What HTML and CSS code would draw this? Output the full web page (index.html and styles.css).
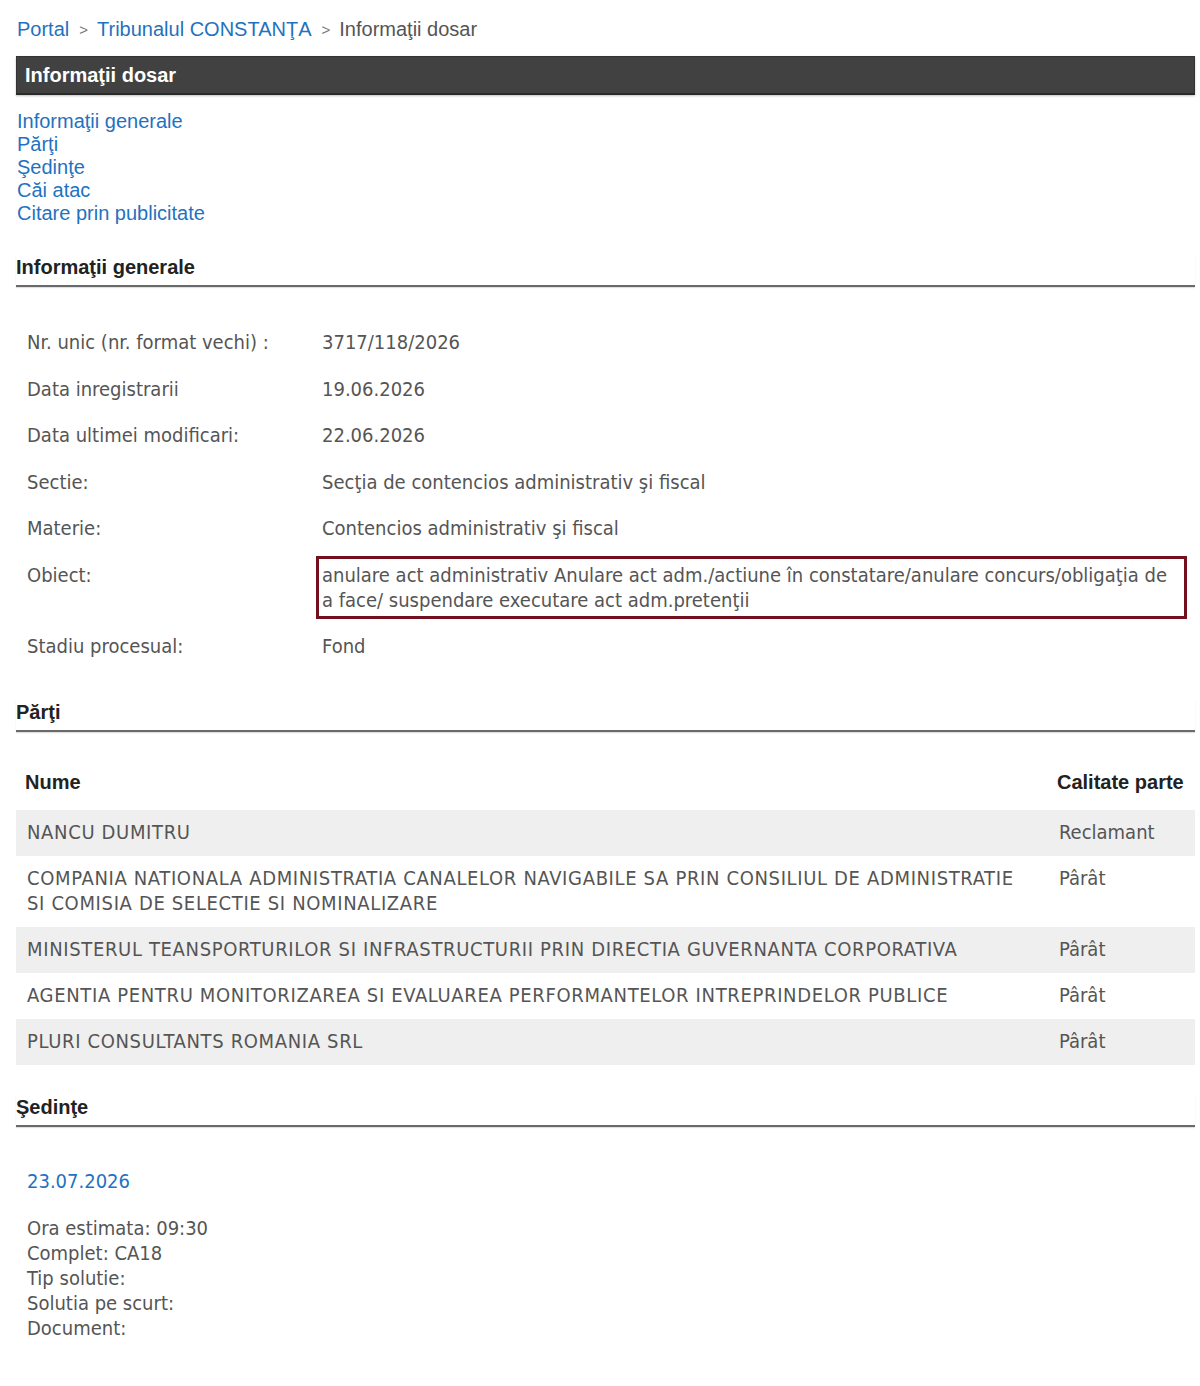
FILE: index.html
```html
<!DOCTYPE html>
<html lang="ro">
<head>
<meta charset="utf-8">
<title>Informaţii dosar</title>
<link rel="stylesheet" href="styles.css">
</head>
<body>
<div class="page">
  <nav class="crumbs">
    <a href="#">Portal</a><span class="sep">&gt;</span><a href="#">Tribunalul CONSTANŢA</a><span class="sep">&gt;</span><span class="current">Informaţii dosar</span>
  </nav>

  <div class="titlebar">Informaţii dosar</div>

  <ul class="toc">
    <li><a href="#gen">Informaţii generale</a></li>
    <li><a href="#parti">Părţi</a></li>
    <li><a href="#sedinte">Şedinţe</a></li>
    <li><a href="#cai">Căi atac</a></li>
    <li><a href="#citare">Citare prin publicitate</a></li>
  </ul>

  <h2 class="section" id="gen">Informaţii generale</h2>
  <div class="info">
    <div class="lbl">Nr. unic (nr. format vechi) :</div>
    <div class="val">3717/118/2026</div>
    <div class="lbl">Data inregistrarii</div>
    <div class="val">19.06.2026</div>
    <div class="lbl">Data ultimei modificari:</div>
    <div class="val">22.06.2026</div>
    <div class="lbl">Sectie:</div>
    <div class="val">Secţia de contencios administrativ şi fiscal</div>
    <div class="lbl">Materie:</div>
    <div class="val">Contencios administrativ şi fiscal</div>
    <div class="lbl">Obiect:</div>
    <div class="val"><div class="highlight">anulare act administrativ Anulare act adm./actiune în constatare/anulare concurs/obligaţia de a face/ suspendare executare act adm.pretenţii</div></div>
    <div class="lbl">Stadiu procesual:</div>
    <div class="val">Fond</div>
  </div>

  <h2 class="section" id="parti">Părţi</h2>
  <table class="parties">
    <thead>
      <tr><th class="name">Nume</th><th class="role">Calitate parte</th></tr>
    </thead>
    <tbody>
      <tr><td class="name">NANCU DUMITRU</td><td class="role">Reclamant</td></tr>
      <tr><td class="name">COMPANIA NATIONALA ADMINISTRATIA CANALELOR NAVIGABILE SA PRIN CONSILIUL DE ADMINISTRATIE SI COMISIA DE SELECTIE SI NOMINALIZARE</td><td class="role">Pârât</td></tr>
      <tr><td class="name">MINISTERUL TEANSPORTURILOR SI INFRASTRUCTURII PRIN DIRECTIA GUVERNANTA CORPORATIVA</td><td class="role">Pârât</td></tr>
      <tr><td class="name">AGENTIA PENTRU MONITORIZAREA SI EVALUAREA PERFORMANTELOR INTREPRINDELOR PUBLICE</td><td class="role">Pârât</td></tr>
      <tr><td class="name">PLURI CONSULTANTS ROMANIA SRL</td><td class="role">Pârât</td></tr>
    </tbody>
  </table>

  <h2 class="section" id="sedinte">Şedinţe</h2>
  <div class="hearing">
    <div class="date">23.07.2026</div>
    <div class="details">
      <div>Ora estimata: 09:30</div>
      <div>Complet: CA18</div>
      <div>Tip solutie:</div>
      <div>Solutia pe scurt:</div>
      <div>Document:</div>
    </div>
  </div>
</div>
</body>
</html>
```

FILE: styles.css
```css
html, body {
  margin: 0;
  padding: 0;
  background: #ffffff;
}

.page {
  margin: 0 5px 0 16px;
  padding-top: 17px;
  padding-bottom: 40px;
  font-family: "Liberation Sans", Arial, sans-serif;
  font-size: 20px;
  color: #222222;
}

a {
  color: #1f72c0;
  text-decoration: none;
}

.crumbs {
  height: 24px;
  line-height: 24px;
  padding-left: 1px;
  overflow: hidden;
}

.crumbs .sep {
  color: #777777;
  font-size: 15px;
  line-height: 15px;
  margin: 0 9px 0 10px;
  vertical-align: 1px;
}

.crumbs .current {
  color: #555555;
}

.titlebar {
  margin-top: 15px;
  height: 39px;
  box-sizing: border-box;
  background: #414141;
  border: 1px solid #333333;
  border-bottom: 2px solid #2a2a2a;
  box-shadow: 0 1px 2px rgba(0, 0, 0, 0.25);
  color: #ffffff;
  font-weight: bold;
  line-height: 36px;
  padding-left: 8px;
}

.toc {
  list-style: none;
  margin: 15px 0 0 0;
  padding: 0 0 0 1px;
  line-height: 23px;
}

.section {
  margin: 30px 0 0 0;
  font-size: 20px;
  font-weight: bold;
  line-height: 24px;
  color: #222222;
  padding: 0 0 6px 0;
  border-bottom: 2px solid #6a6a6a;
  box-shadow: 0 1px 1px rgba(0, 0, 0, 0.12);
}

.info {
  margin-top: 32px;
  display: grid;
  grid-template-columns: 300px 1fr;
  font-family: "DejaVu Sans Condensed", "DejaVu Sans", sans-serif;
  font-stretch: condensed;
  font-size: 20px;
  line-height: 25px;
  color: #555555;
}

.info .lbl {
  padding: 11px 0 10.5px 11px;
}

.info .val {
  padding: 11px 0 10.5px 6px;
}

.highlight {
  margin: -6.5px 8px -6px -6px;
  border: 3px solid #72101f;
  padding: 3.5px 3px 3px 3px;
}

.parties {
  margin-top: 27px;
  width: 100%;
  border-collapse: collapse;
  font-family: "DejaVu Sans Condensed", "DejaVu Sans", sans-serif;
  font-stretch: condensed;
  font-size: 20px;
  line-height: 25px;
  color: #555555;
}

.parties th {
  font-family: "Liberation Sans", Arial, sans-serif;
  font-stretch: normal;
  font-weight: bold;
  color: #222222;
  text-align: left;
  padding: 11px 0 15px 9px;
}

.parties th.role {
  width: 138px;
  padding-left: 8px;
}

.parties td {
  padding: 10.5px 22px 10.5px 11px;
  vertical-align: top;
}

.parties td.name {
  letter-spacing: 0.65px;
}

.parties td.role {
  padding-left: 10px;
  padding-right: 0;
}

.parties tbody tr:nth-child(odd) {
  background: #efefef;
}

.hearing {
  padding-left: 11px;
  font-family: "DejaVu Sans Condensed", "DejaVu Sans", sans-serif;
  font-stretch: condensed;
  font-size: 20px;
  line-height: 25px;
  color: #555555;
}

.hearing .date {
  margin-top: 42px;
  color: #1f72c0;
}

.hearing .details {
  margin-top: 22px;
}
```
